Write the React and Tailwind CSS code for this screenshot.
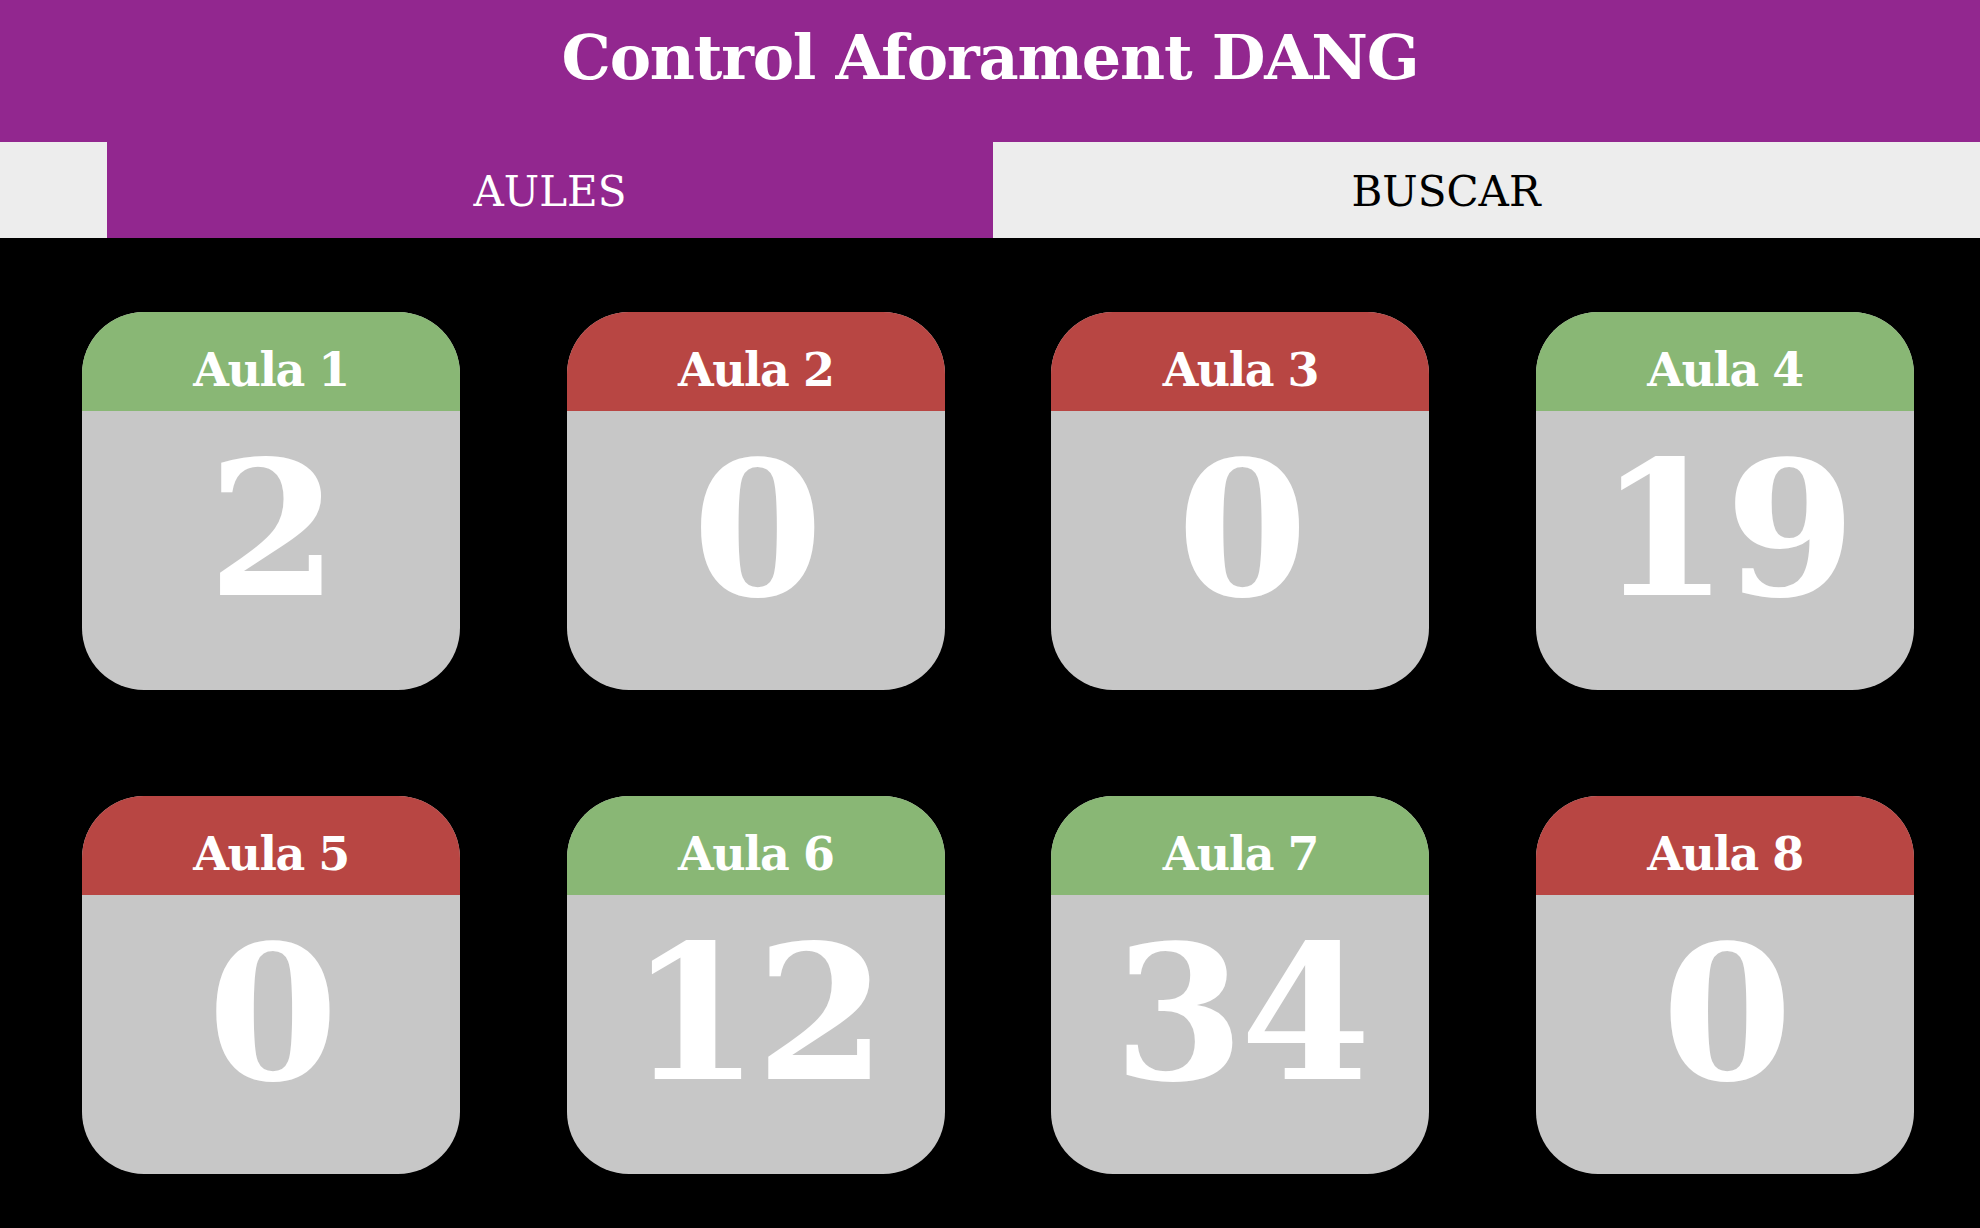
import React from "react";

const aules = [
  { name: "Aula 1", n: 2, ok: true },
  { name: "Aula 2", n: 0, ok: false },
  { name: "Aula 3", n: 0, ok: false },
  { name: "Aula 4", n: 19, ok: true },
  { name: "Aula 5", n: 0, ok: false },
  { name: "Aula 6", n: 12, ok: true },
  { name: "Aula 7", n: 34, ok: true },
  { name: "Aula 8", n: 0, ok: false },
];

function Card({ name, n, ok }) {
  return (
    <div className="w-[378px] h-[378px] rounded-[62px] overflow-hidden bg-[#c7c7c7] flex flex-col">
      <div
        className={
          "h-[99px] flex items-start justify-center pt-[35px] " +
          (ok ? "bg-[#89b775]" : "bg-[#b84643]")
        }
      >
        <span className="text-white font-bold text-[46px] leading-none tracking-[-1.5px] [font-family:'DejaVu_Serif',serif]">
          {name}
        </span>
      </div>
      <div className="flex-1 flex justify-center pt-[24px]">
        <span className="text-white font-bold text-[188px] leading-none tracking-[-4px] [font-family:'DejaVu_Serif',serif]">
          {n}
        </span>
      </div>
    </div>
  );
}

export default function App() {
  return (
    <div className="w-[1980px] h-[1228px] bg-black overflow-hidden [font-family:'DejaVu_Serif',serif]">
      <header className="h-[142px] bg-[#92278f] flex justify-center pt-[27px]">
        <h1 className="text-white font-bold text-[62px] leading-none tracking-[-1.2px] h-fit">
          Control Aforament DANG
        </h1>
      </header>
      <nav className="h-[96px] bg-[#ededed] flex pl-[107px]">
        <div className="w-[886px] bg-[#92278f] flex items-center justify-center pt-[4px]">
          <span className="text-white text-[42px] leading-none">AULES</span>
        </div>
        <div className="w-[906px] flex items-center justify-center pt-[4px]">
          <span className="text-black text-[42px] leading-none">BUSCAR</span>
        </div>
      </nav>
      <main className="pt-[74px] pl-[82px] grid grid-cols-[repeat(4,378px)] gap-x-[106.7px] gap-y-[106px]">
        {aules.map((a) => (
          <Card key={a.name} {...a} />
        ))}
      </main>
    </div>
  );
}
